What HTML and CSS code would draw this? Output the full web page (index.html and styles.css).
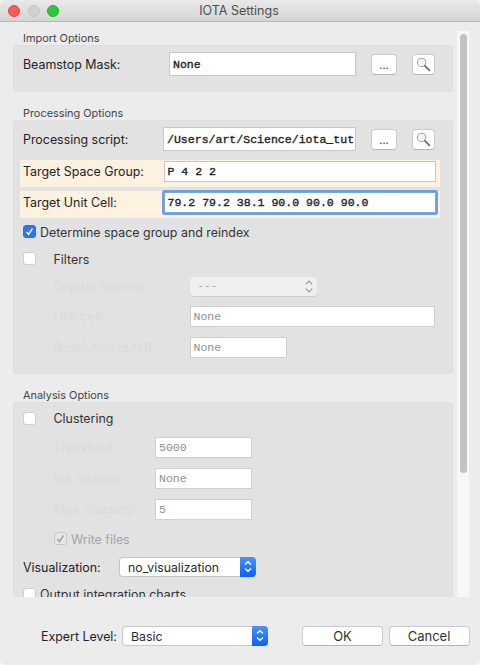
FILE: index.html
```html
<!DOCTYPE html>
<html lang="en">
<head>
<meta charset="utf-8">
<title>IOTA Settings</title>
<link rel="stylesheet" href="styles.css">
</head>
<body>
<div class="window">
  <header class="titlebar">
    <div class="lights"><i class="light red"></i><i class="light grey"></i><i class="light green"></i></div>
    <div class="title">IOTA Settings</div>
  </header>
  <main class="scroll-area">
    <div class="panes">
      <div class="group-title first">Import Options</div>
      <section class="box box-import">
        <div class="row row-main">
          <label class="label w-import">Beamstop Mask:</label>
          <div class="input w-beam">None</div>
          <button class="btn btn-dots">...</button>
          <button class="btn btn-search"><svg width="17" height="17" viewBox="0 0 17 17"><circle cx="6.6" cy="6.4" r="4.2" fill="#f4f7fa" stroke="#a8a8a8" stroke-width="1.1"/><path d="M9.8 9.6l4.6 4.8" stroke="#6b6b6b" stroke-width="1.7" stroke-linecap="round"/></svg></button>
        </div>
      </section>
      <div class="group-title">Processing Options</div>
      <section class="box box-proc">
        <div class="row row-main">
          <label class="label w-proc">Processing script:</label>
          <div class="input w-script">/Users/art/Science/iota_tut</div>
          <button class="btn btn-dots">...</button>
          <button class="btn btn-search"><svg width="17" height="17" viewBox="0 0 17 17"><circle cx="6.6" cy="6.4" r="4.2" fill="#f4f7fa" stroke="#a8a8a8" stroke-width="1.1"/><path d="M9.8 9.6l4.6 4.8" stroke="#6b6b6b" stroke-width="1.7" stroke-linecap="round"/></svg></button>
        </div>
        <div class="hl hl-first">
          <label class="label w-hl">Target Space Group:</label>
          <div class="input w-target">P 4 2 2</div>
        </div>
        <div class="hl hl-second">
          <label class="label w-hl">Target Unit Cell:</label>
          <div class="input w-target focused">79.2 79.2 38.1 90.0 90.0 90.0</div>
        </div>
        <div class="check-row mt-7">
          <span class="cb cb-on"><svg width="13" height="13" viewBox="0 0 13 13"><path d="M3.6 6.9l2 2.4 3.8-5.6" fill="none" stroke="#fff" stroke-width="1.5"/></svg></span>
          <span class="check-text">Determine space group and reindex</span>
        </div>
        <div class="check-row mt-14">
          <span class="cb"></span>
          <span class="check-text wide">Filters</span>
        </div>
        <div class="row sub mt-12 h-19">
          <label class="label off w-sub">Crystal System:</label>
          <div class="select select-off">
            <span>---</span>
            <svg class="off-arrows" width="10" height="15" viewBox="0 0 10 15"><path d="M1.8 5.4L5 2.2l3.2 3.2M1.8 9.6L5 12.8l3.2-3.2" fill="none" stroke="#9a9a9a" stroke-width="1.2"/></svg>
          </div>
        </div>
        <div class="row sub mt-9 h-21">
          <label class="label off w-sub">Unit cell:</label>
          <div class="input input-off w-unit">None</div>
        </div>
        <div class="row sub mt-9 h-21">
          <label class="label off w-sub">Resolution cutoff:</label>
          <div class="input input-off w-res">None</div>
        </div>
      </section>
      <div class="group-title">Analysis Options</div>
      <section class="box box-analysis">
        <div class="check-row">
          <span class="cb"></span>
          <span class="check-text wide">Clustering</span>
        </div>
        <div class="row sub mt-12 h-21">
          <label class="label off w-cluster">Threshold:</label>
          <div class="input input-off w-num">5000</div>
        </div>
        <div class="row sub mt-10 h-21">
          <label class="label off w-cluster">No. images:</label>
          <div class="input input-off w-num">None</div>
        </div>
        <div class="row sub mt-10 h-21">
          <label class="label off w-cluster">Max. clusters:</label>
          <div class="input input-off w-num">5</div>
        </div>
        <div class="check-row sub mt-12">
          <span class="cb cb-off"><svg width="13" height="13" viewBox="0 0 13 13"><path d="M3.4 6.9l2.1 2.6 3.9-6" fill="none" stroke="#9c9c9c" stroke-width="1.4"/></svg></span>
          <span class="check-text dim">Write files</span>
        </div>
        <div class="row mt-12 h-19">
          <label class="label low w-vis">Visualization:</label>
          <div class="select select-on w-visual">
            <span>no_visualization</span>
            <span class="stepper"><svg width="10" height="15" viewBox="0 0 10 15"><path d="M2 5.6L5 2.8l3 2.8M2 9.4l3 2.8 3-2.8" fill="none" stroke="#fff" stroke-width="1.4"/></svg></span>
          </div>
        </div>
        <div class="check-row mt-11">
          <span class="cb"></span>
          <span class="check-text">Output integration charts</span>
        </div>
      </section>
    </div>
    <div class="track"><div class="thumb"></div></div>
  </main>
  <footer class="footer">
    <label class="label expert">Expert Level:</label>
    <div class="select select-on w-expert">
      <span>Basic</span>
      <span class="stepper"><svg width="10" height="15" viewBox="0 0 10 15"><path d="M2 5.6L5 2.8l3 2.8M2 9.4l3 2.8 3-2.8" fill="none" stroke="#fff" stroke-width="1.4"/></svg></span>
    </div>
    <button class="btn btn-action ok">OK</button>
    <button class="btn btn-action cancel">Cancel</button>
  </footer>
</div>
</body>
</html>
```
FILE: styles.css
```css
* { box-sizing: border-box; }
html, body { margin: 0; padding: 0; }
body { width: 480px; height: 665px; background: #f6f6f6; overflow: hidden; font-family: Inter, "Liberation Sans", sans-serif; font-size: 12.5px; color: #262626; }

.window { width: 480px; height: 665px; background: #ececec; border-radius: 6px; overflow: hidden; display: flex; flex-direction: column; }

.titlebar { height: 22px; flex: none; display: flex; align-items: center; background: linear-gradient(#e9e9e9, #d4d4d4); border-bottom: 1px solid #b8b8b8; position: relative; }
.lights { display: flex; gap: 7.5px; padding-left: 8px; }
.light { display: block; width: 12px; height: 12px; border-radius: 50%; }
.red { background: #fb5a56; border: 1px solid #e2463f; }
.grey { background: #d0d0d0; border: 1px solid #c4c4c4; }
.green { background: #2cc840; border: 1px solid #22ad31; }
.title { position: absolute; left: 0; right: 2px; top: 3px; text-align: center; font-size: 12.5px; line-height: 16px; color: #4e4e4e; }

.scroll-area { height: 575px; flex: none; display: flex; overflow: hidden; }
.panes { width: 453px; padding-left: 13px; flex: none; }
.track { width: 12px; margin: 9px 0 0 4px; background: #f7f7f7; padding: 2.5px 3px 0; flex: none; }
.thumb { width: 7px; height: 439px; background: #c2c2c2; border-radius: 4px; }

.group-title { height: 15px; margin-top: 13px; padding-left: 10px; font-size: 10.9px; line-height: 16.5px; color: #444; }
.group-title.first { margin-top: 8px; }

.box { background: #e2e2e2; border: 1px solid #dedede; border-radius: 3px; padding-left: 9px; }
.box-import { height: 47px; padding-top: 6px; }
.box-proc { height: 254px; padding-top: 6px; }
.box-analysis { height: 300px; padding-top: 9px; }

.row { display: flex; align-items: center; }
.row-main { height: 24px; }
.row-main .input { height: 24px; line-height: 23px; }
.sub { margin-left: 30.5px; }
.h-19 { height: 19.5px; }
.h-21 { height: 21px; }
.mt-7 { margin-top: 7px; }
.mt-9 { margin-top: 9.5px; }
.mt-10 { margin-top: 10px; }
.mt-11 { margin-top: 11.5px; }
.mt-12 { margin-top: 12px; }
.mt-14 { margin-top: 14px; }

.label { flex: none; display: block; font-size: 12.4px; color: #222; }
.label.off { color: #dbdbdb; }
.label.low { padding-top: 2px; }
.w-import { width: 146px; }
.w-proc { width: 140px; }
.w-hl { width: 140.5px; }
.w-sub { width: 136px; }
.w-cluster { width: 101.5px; }
.w-vis { width: 96px; }

.input { flex: none; height: 21px; background: #fff; border: 1px solid #c6c6c6; font-family: "Liberation Mono", monospace; font-size: 11.55px; font-weight: 400; -webkit-text-stroke: 0.35px #222; line-height: 20px; padding-left: 3px; color: #222; white-space: nowrap; overflow: hidden; }
.input-off { border-color: #cfcfcf; color: #8e8e8e; -webkit-text-stroke: 0; }
.w-beam { width: 187px; }
.w-script { width: 193px; }
.w-target { width: 272px; }
.w-unit { width: 245.5px; }
.w-res { width: 97px; }
.w-num { width: 96.5px; }
.focused { border-color: #7fa6da; box-shadow: 0 0 0 2px #6d9fe4; border-radius: 1px; }

.btn { flex: none; display: flex; align-items: center; justify-content: center; padding: 0; background: #fff; border: 1px solid #cbcbcb; border-bottom-color: #b4b4b4; border-radius: 4px; font-family: Inter, "Liberation Sans", sans-serif; color: #333; }
.btn-dots { width: 26px; height: 21px; margin-left: 15px; font-size: 11px; padding-top: 2px; }
.btn-search { width: 23px; height: 21px; margin-left: 15px; }
.btn-action { width: 81px; height: 20.5px; font-size: 13px; color: #333; }
.ok { margin-left: 34px; }
.cancel { margin-left: 5.5px; }

.hl { width: 420px; height: 27px; margin-left: -3px; padding: 1px 0 0 3px; background: #fdf1e0; display: flex; }
.hl .label { line-height: 22px; }
.hl-first { margin-top: 9px; }
.hl-second { margin-top: 4px; }

.check-row { display: flex; align-items: center; height: 13px; }
.cb { flex: none; width: 13px; height: 13px; background: #fff; border: 1px solid #cdcdcd; border-radius: 3px; display: block; }
.cb svg { display: block; margin: -1px; }
.cb-on { background: #2f76f0; border-color: #2f6fe0; }
.cb-off { background: #e6e6e6; border-color: #c6c6c6; }
.check-text { margin-left: 4px; padding-top: 1px; font-size: 12.4px; color: #333; white-space: nowrap; }
.box-analysis .check-text { padding-top: 0; }
.check-text.wide { margin-left: 17.5px; }
.box-analysis .check-text.dim { margin-left: 4.5px; padding-top: 1px; color: #a4a4a4; }

.select { flex: none; height: 19.5px; display: flex; align-items: center; justify-content: space-between; border-radius: 4px; font-size: 12.3px; }
.select-off { width: 127.5px; background: #efefef; border-bottom: 1px solid #cdcdcd; color: #a6a6a6; font-family: "Liberation Mono", monospace; font-size: 11px; padding: 0 3px 0 8px; }
.off-arrows { display: block; }
.select-on { background: #fff; border: 1px solid #c6c6c6; border-right: 0; padding-left: 8px; color: #2a2a2a; }
.select-on > span:first-child { padding-top: 1px; }
.stepper { width: 16px; height: calc(100% + 2px); margin: -1px 0; display: flex; align-items: center; justify-content: center; background: linear-gradient(#4a93fb, #0f5ffb); border-radius: 0 4px 4px 0; }
.stepper svg { display: block; }
.w-visual { width: 136.5px; }
.w-expert { width: 146px; height: 20.5px; }

.footer { height: 68px; flex: none; display: flex; align-items: flex-start; padding: 28.5px 0 0 41px; }
.expert { width: 81px; line-height: 21.5px; }
```
